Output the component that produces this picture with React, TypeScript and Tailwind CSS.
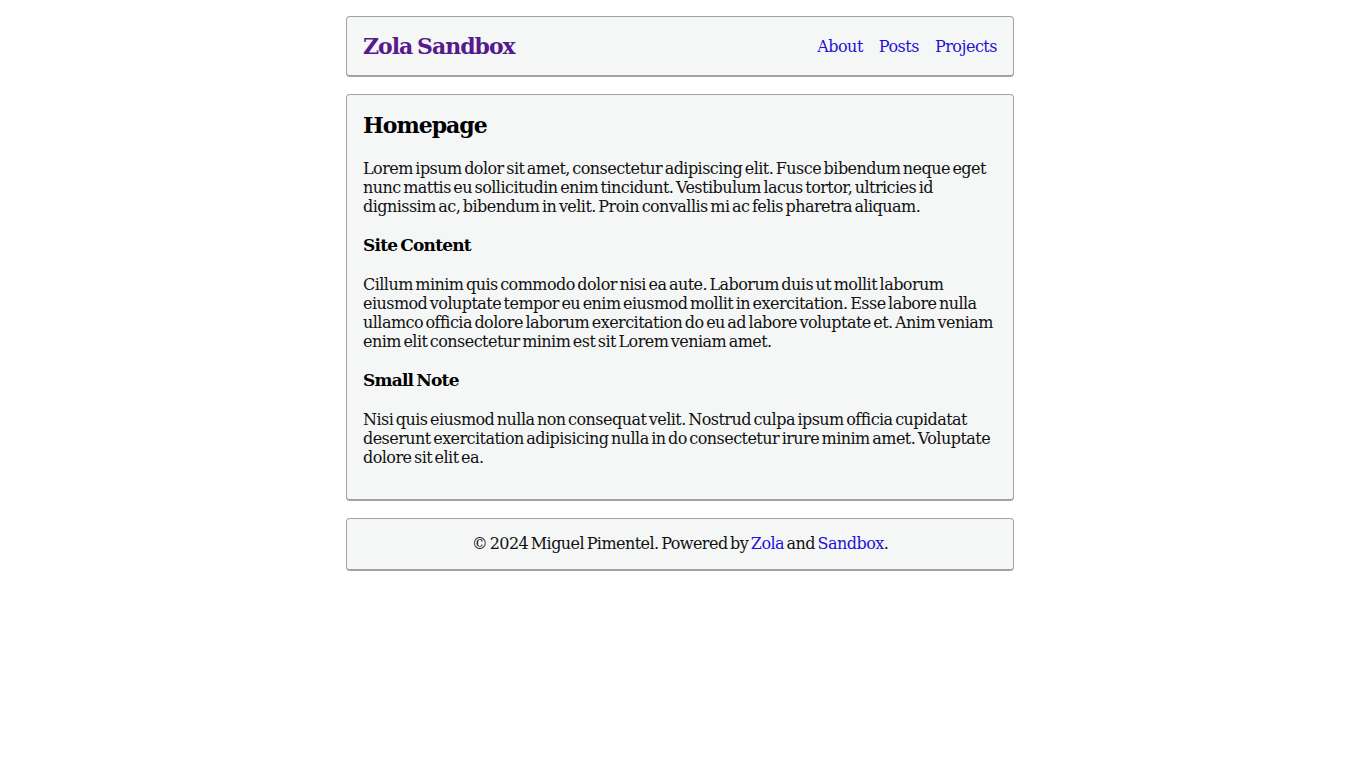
export default function App() {
  return (
    <div className="min-h-screen bg-white font-['DejaVu_Serif',serif] text-[16px] leading-[19px] tracking-[-0.55px] text-[#111] [word-spacing:-2px]">
      <div className="mx-auto flex w-[668px] flex-col gap-[17px] pt-4">
        {/* Header */}
        <header className="flex items-center justify-between rounded border border-b-2 border-[#a3a3a3] bg-[#f5f6f6] px-4 py-[15px]">
          <a href="#" className="text-[22px] font-bold leading-[28px] tracking-[-1px] text-[#551a8b]">
            Zola Sandbox
          </a>
          <nav className="flex gap-4 tracking-[-0.5px] text-[#1f12d6]">
            <a href="#">About</a>
            <a href="#">Posts</a>
            <a href="#">Projects</a>
          </nav>
        </header>

        {/* Main content */}
        <main className="flex flex-col gap-[18.5px] rounded border border-b-2 border-[#a3a3a3] bg-[#f5f6f6] px-4 pt-4 pb-[32px]">
          <h1 className="mb-px text-[22px] font-bold leading-[28px] tracking-[-1px] text-black">Homepage</h1>
          <p>
            Lorem ipsum dolor sit amet, consectetur adipiscing elit. Fusce bibendum neque eget nunc
            mattis eu sollicitudin enim tincidunt. Vestibulum lacus tortor, ultricies id dignissim ac,
            bibendum in velit. Proin convallis mi ac felis pharetra aliquam.
          </p>
          <h3 className="text-[17px] font-bold leading-[22px] tracking-[-0.8px] text-black">Site Content</h3>
          <p>
            Cillum minim quis commodo dolor nisi ea aute. Laborum duis ut mollit laborum eiusmod
            voluptate tempor eu enim eiusmod mollit in exercitation. Esse labore nulla ullamco officia
            dolore laborum exercitation do eu ad labore voluptate et. Anim veniam enim elit consectetur
            minim est sit Lorem veniam amet.
          </p>
          <h3 className="text-[17px] font-bold leading-[22px] tracking-[-0.8px] text-black">Small Note</h3>
          <p>
            Nisi quis eiusmod nulla non consequat velit. Nostrud culpa ipsum officia cupidatat deserunt
            exercitation adipisicing nulla in do consectetur irure minim amet. Voluptate dolore sit
            elit ea.
          </p>
        </main>

        {/* Footer */}
        <footer className="rounded border border-b-2 border-[#a3a3a3] bg-[#f5f6f6] px-4 py-[15.5px] text-center">
          © 2024 Miguel Pimentel. Powered by{" "}
          <a href="#" className="text-[#1f12d6]">Zola</a> and{" "}
          <a href="#" className="text-[#1f12d6]">Sandbox</a>.
        </footer>
      </div>
    </div>
  )
}
